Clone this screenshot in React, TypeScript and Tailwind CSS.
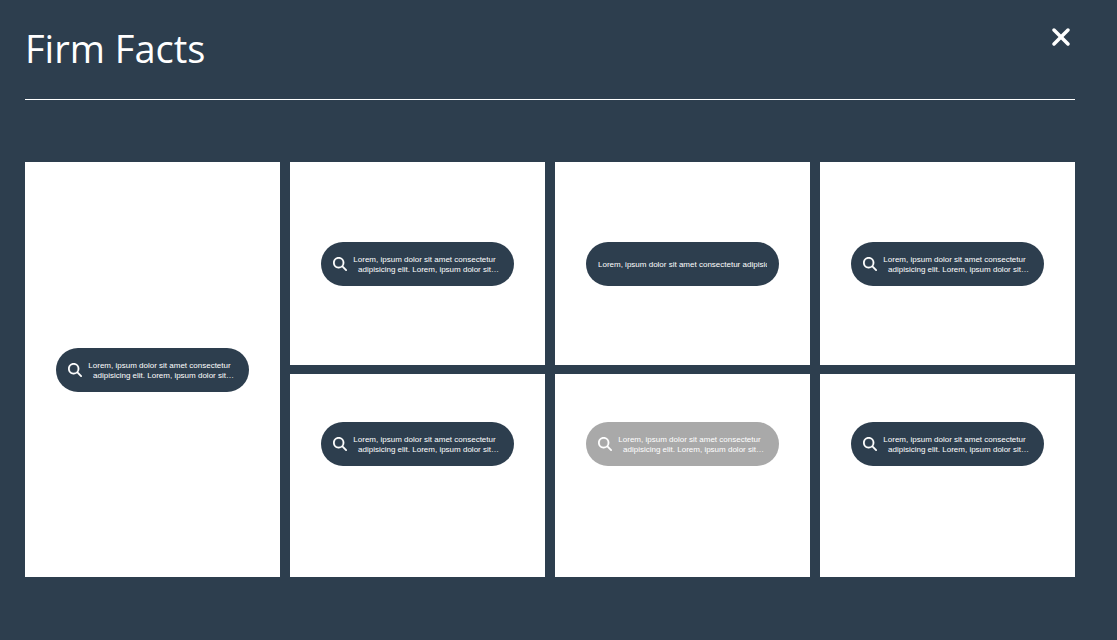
import { FaMagnifyingGlass, FaXmark } from "react-icons/fa6";
import clsx from "clsx";

const TEXT =
  "Lorem, ipsum dolor sit amet consectetur adipisicing elit. Lorem, ipsum dolor sit amet consectetur adipisicing elit.";

type Fact = {
  id: number;
  placement: string;
  muted?: boolean;
  singleLine?: boolean;
};

const facts: Fact[] = [
  { id: 1, placement: "row-span-2 items-center" },
  { id: 2, placement: "items-center" },
  { id: 3, placement: "items-center", singleLine: true },
  { id: 4, placement: "items-center" },
  { id: 5, placement: "items-start pt-[48px]" },
  { id: 6, placement: "items-start pt-[48px]", muted: true },
  { id: 7, placement: "items-start pt-[48px]" },
];

function FactButton({ muted, singleLine }: Fact) {
  return (
    <button
      type="button"
      className={clsx(
        "flex h-11 w-full items-center rounded-full px-3 text-center text-[8px] leading-[10px] text-white",
        muted ? "bg-[#a9a9a9]" : "bg-[#2d3e4e]",
      )}
    >
      {singleLine ? (
        <span className="min-w-0 flex-1 overflow-hidden whitespace-nowrap pt-0.5 text-left">{TEXT}</span>
      ) : (
        <>
          <FaMagnifyingGlass className="size-3.5 shrink-0 stroke-4" aria-hidden="true" />
          <span className="line-clamp-2 min-w-0 flex-1 px-1 pt-0.5">{TEXT}</span>
        </>
      )}
    </button>
  );
}

export default function App() {
  return (
    <main className="flex min-h-screen flex-col bg-[#2d3e4e] pb-[63px] pl-[25px] pr-[42px] font-['Liberation_Sans',Arial,sans-serif] text-white">
      <header className="flex items-start justify-between border-b border-white pb-[25px] pt-[22px]">
        <h1 className="font-['Open_Sans',sans-serif] text-[38px] leading-[52px]">Firm Facts</h1>
        <button type="button" aria-label="Close" className="flex h-[30px] items-center">
          <FaXmark className="size-7" />
        </button>
      </header>
      <section className="mt-[62px] grid flex-1 grid-cols-4 grid-rows-2 gap-x-2.5 gap-y-[9px]">
        {facts.map((fact) => (
          <article key={fact.id} className={clsx("flex bg-white px-[31px]", fact.placement)}>
            <FactButton {...fact} />
          </article>
        ))}
      </section>
    </main>
  );
}
